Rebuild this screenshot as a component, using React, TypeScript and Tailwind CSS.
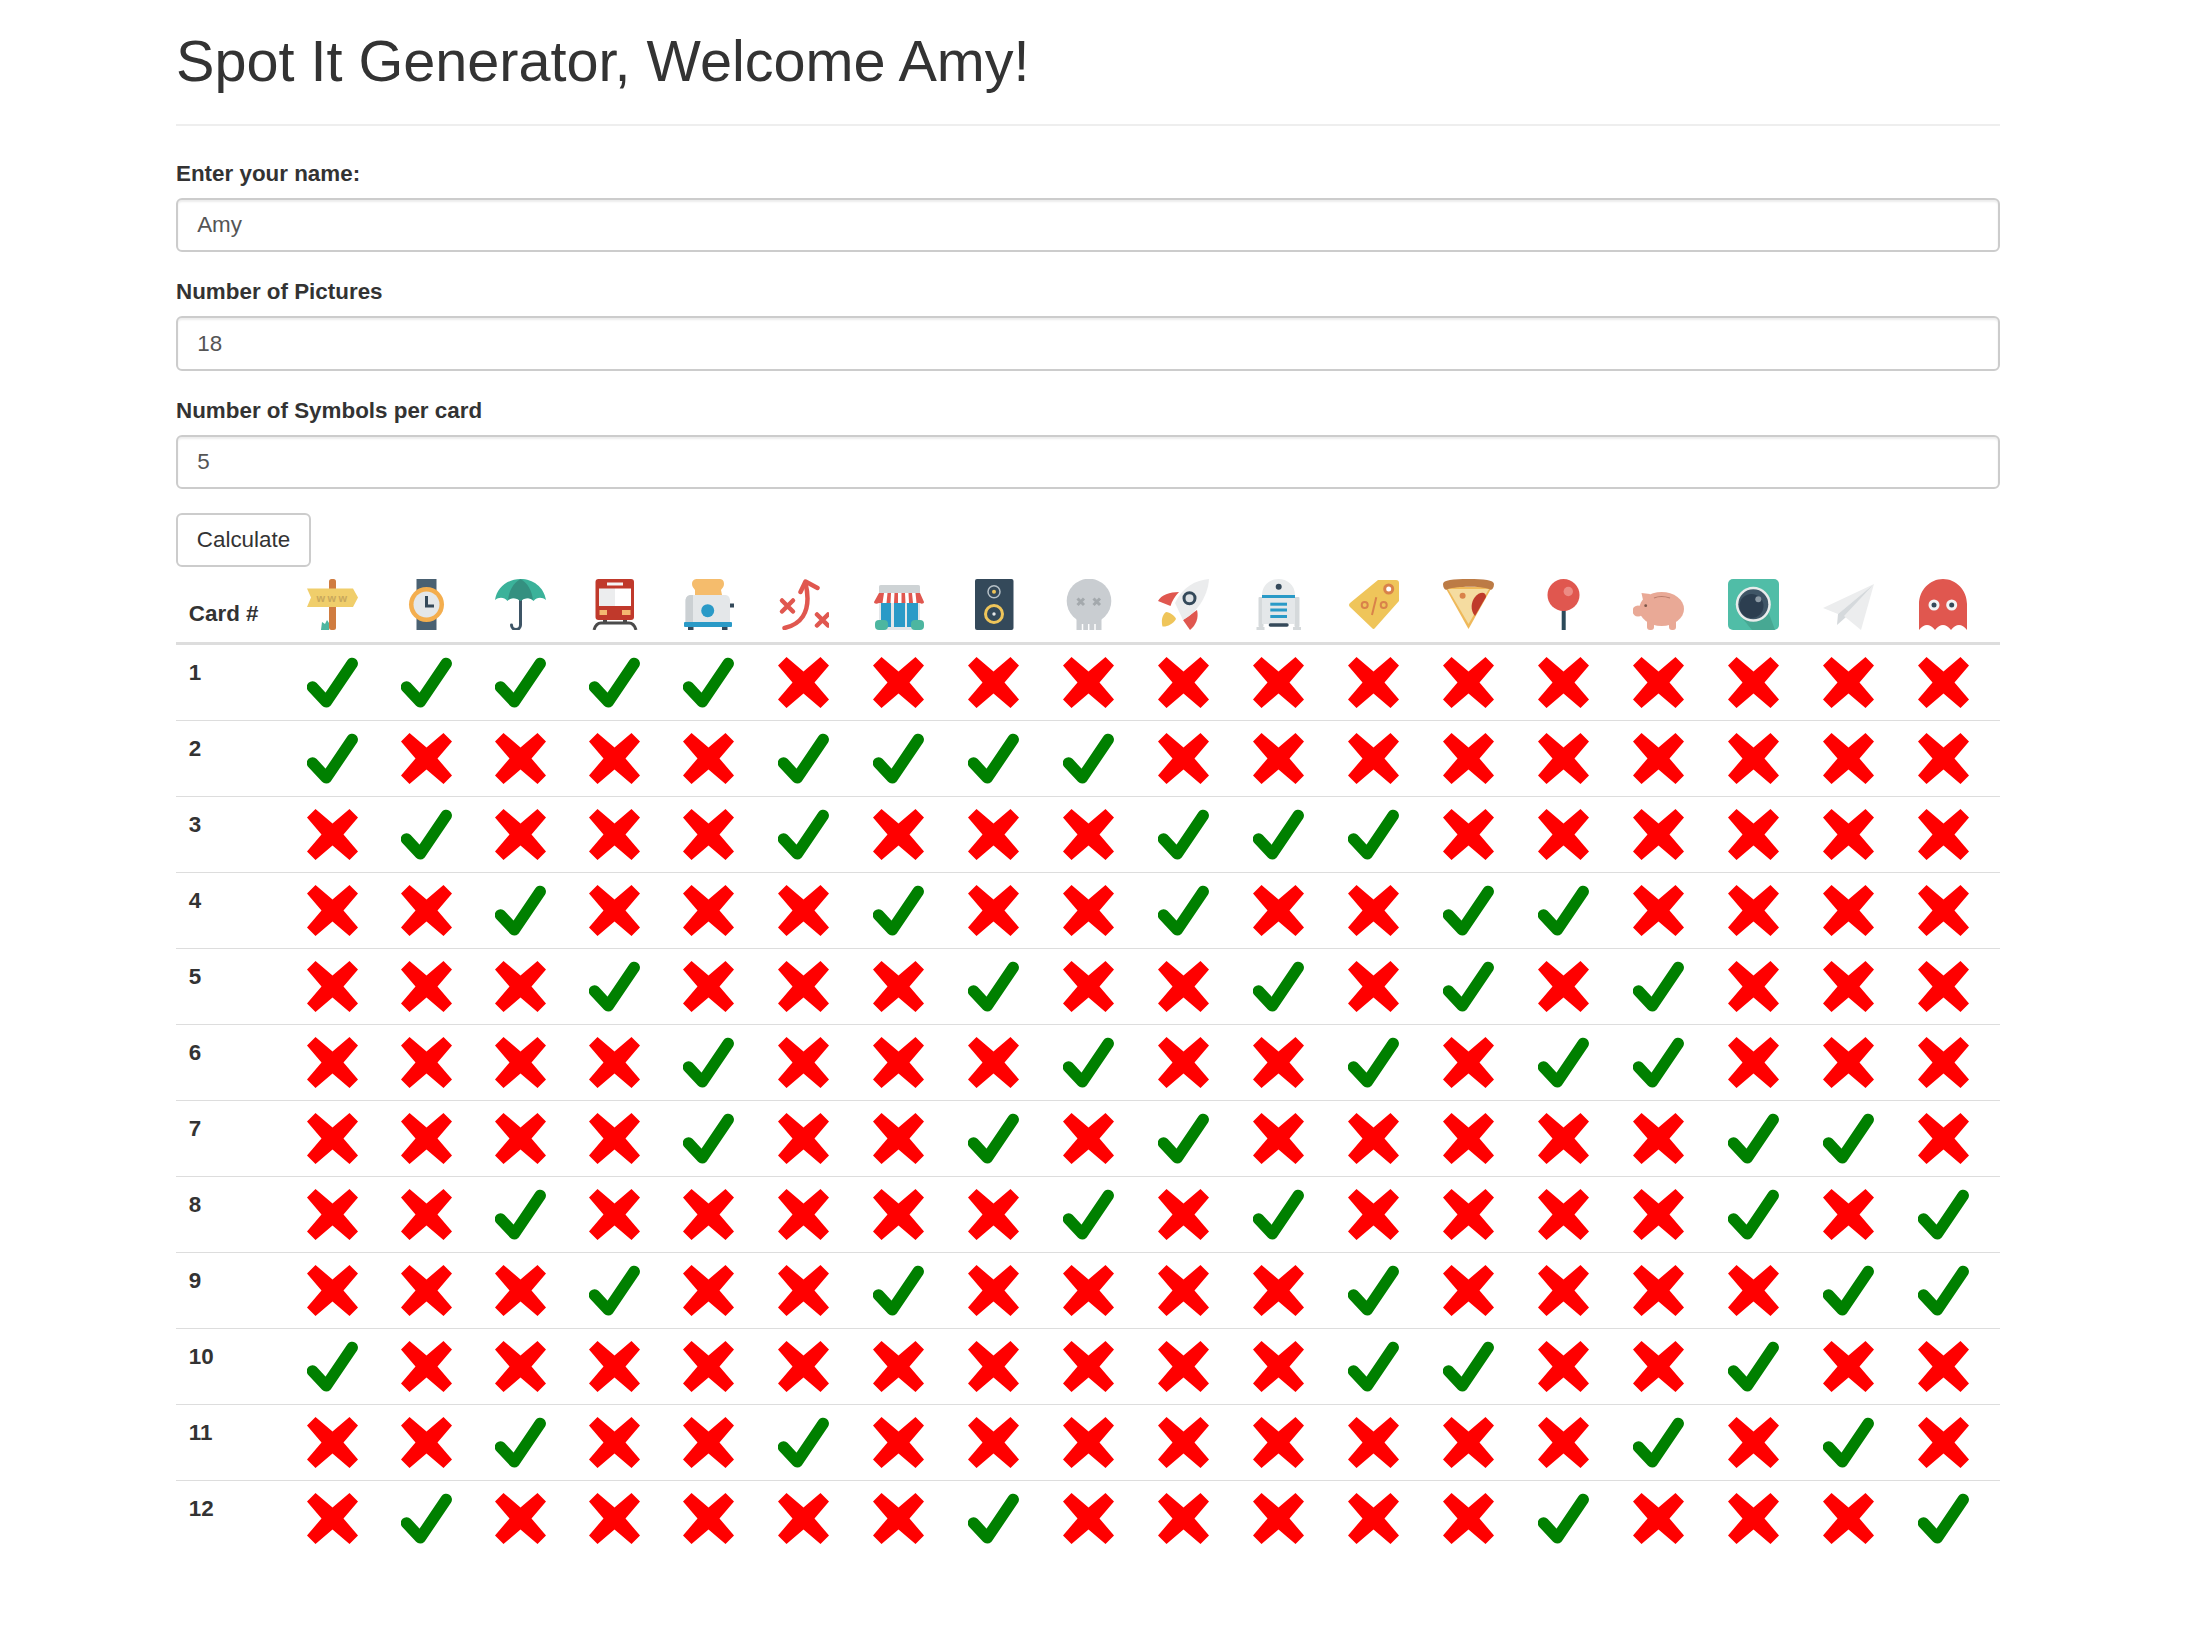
import type { ReactNode } from "react";

const CARDS = [
  [1, 2, 3, 4, 5],
  [1, 6, 7, 8, 9],
  [2, 6, 10, 11, 12],
  [3, 7, 10, 13, 14],
  [4, 8, 11, 13, 15],
  [5, 9, 12, 14, 15],
  [5, 8, 10, 16, 17],
  [3, 9, 11, 16, 18],
  [4, 7, 12, 17, 18],
  [1, 12, 13, 16],
  [3, 6, 15, 17],
  [2, 8, 14, 18],
];

const RED = "#E0574F";
const NAVY = "#34495A";
const BLUE = "#2A9AC7";
const YELLOW = "#EFC55A";
const TEAL = "#4DB6A0";
const LIGHT = "#E4E7E9";

function Icon({ children }: { children: ReactNode }) {
  return (
    <svg viewBox="0 0 51 51" className="block w-[51px] h-[51px]">
      {children}
    </svg>
  );
}

function Check() {
  return (
    <Icon>
      <path
        d="M5.5 30L19.3 44.8L45.2 6.5"
        fill="none"
        stroke="#008000"
        strokeWidth="11.5"
        strokeLinecap="round"
        strokeLinejoin="round"
      />
    </Icon>
  );
}

function Cross() {
  return (
    <Icon>
      <polygon
        points="8.5,0 25.5,14.5 42.5,0 51,8.5 36.5,25.5 51,42.5 42.5,51 25.5,36.5 8.5,51 0,42.5 14.5,25.5 0,8.5"
        fill="#FF0000"
      />
    </Icon>
  );
}

const pictures: ReactNode[] = [
  // signpost
  <Icon key="sign">
    <rect x="22" y="0" width="7" height="51" rx="2.5" fill="#D07C40" />
    <path d="M14 51L15 43L18 45L20 41L22 44V51Z" fill={TEAL} />
    <polygon points="0,9.5 46,9.5 51,18.5 46,28 0,28 4,18.5" fill="#F0CE6B" />
    <text x="9.5" y="22.5" fontSize="11" fill="#C9A85C" fontFamily="Liberation Sans" letterSpacing="2.5">www</text>
  </Icon>,
  // watch
  <Icon key="watch">
    <rect x="15.5" y="0" width="20" height="51" fill="#4A6172" />
    <circle cx="25.5" cy="25.5" r="17.5" fill="#F4AE4E" />
    <circle cx="25.5" cy="25.5" r="13" fill={LIGHT} />
    <path d="M25.5 17V27H33" fill="none" stroke={NAVY} strokeWidth="3" />
  </Icon>,
  // umbrella
  <Icon key="umbrella">
    <path d="M25.5 20V46a4.5 4.5 0 0 1-9 0" fill="none" stroke="#3E5566" strokeWidth="3" strokeLinecap="round" />
    <path d="M0 21C2 8 13 0 25.5 0C38 0 49 8 51 21C47 18 42 18 38.5 22C35 18 29 18 25.5 22C22 18 16 18 12.5 22C9 18 4 18 0 21Z" fill="#3BB29A" />
    <path d="M25.5 0C18 4 14 12 13 21C17 18 22 19 25.5 22C29 19 34 18 38 21C37 12 33 4 25.5 0Z" fill="#349080" />
  </Icon>,
  // train
  <Icon key="train">
    <path d="M5 51Q7 44 12 44H40Q45 44 47 51" fill="none" stroke="#4B4B4B" strokeWidth="3" />
    <rect x="14" y="40" width="4" height="5" fill="#4B4B4B" />
    <rect x="34" y="40" width="4" height="5" fill="#4B4B4B" />
    <rect x="6.5" y="0" width="38.5" height="41" rx="3" fill="#C0392B" />
    <rect x="18" y="3.5" width="16" height="3" fill="#F5F5F5" />
    <rect x="10" y="9.5" width="16" height="17.5" fill="#ECEDEE" />
    <rect x="26" y="9.5" width="16" height="17.5" fill="#FFFFFF" />
    <rect x="10.5" y="31" width="7.5" height="5" fill="#F4B870" />
    <rect x="33" y="31" width="8.5" height="5" fill="#F4B870" />
  </Icon>,
  // toaster
  <Icon key="toaster">
    <path d="M9 5C9 1 12 0 14 0H36C39 0 41 1 41 5C41 8 39 9 38 11L39 16H12L12 11C11 9 9 8 9 5Z" fill="#F5BC6C" />
    <rect x="47" y="24.5" width="4" height="4" fill={NAVY} />
    <path d="M2.5 43V22C2.5 18 5 16 8 16H42C45 16 47 18 47 22V43Z" fill={LIGHT} />
    <path d="M2.5 43V22C2.5 18 5 16 8 16H10V43Z" fill="#CBD0D3" />
    <circle cx="24.7" cy="31.7" r="6.5" fill={BLUE} />
    <rect x="5" y="47" width="5.5" height="4" fill={NAVY} />
    <rect x="39" y="47" width="5.5" height="4" fill={NAVY} />
    <rect x="1" y="43" width="48" height="5" rx="1" fill={BLUE} />
  </Icon>,
  // play diagram
  <Icon key="play">
    <g fill="none" stroke={RED} strokeWidth="4.5" strokeLinecap="round" strokeLinejoin="round">
      <path d="M6.5 49C20 46 35 36 27.5 4" />
      <path d="M22.5 13L27.5 2.5L39.5 9" />
      <path d="M4 21.5L15 32.5M15 21.5L4 32.5" />
      <path d="M39 35.5L50 46.5M50 35.5L39 46.5" />
    </g>
  </Icon>,
  // store
  <Icon key="store">
    <rect x="6" y="6" width="41" height="45" rx="2" fill={LIGHT} />
    <rect x="6" y="6" width="41" height="9" rx="2" fill="#CED3D5" />
    <rect x="8" y="24" width="10" height="24" fill={BLUE} />
    <rect x="21" y="24" width="11" height="24" fill={BLUE} />
    <rect x="34" y="24" width="11" height="24" fill={BLUE} />
    <path d="M6 14H47L51 23C51 25 48 25 47 24H6C4 25 1 25 1 23Z" fill={RED} />
    <path d="M11 14L9.5 24H13.5L14.5 14ZM18 14L17.5 24H21L21.5 14ZM25 14V24H28.5V14ZM32 14L32.5 24H36L35.5 14ZM39 14L40 24H43.5L42.5 14Z" fill="#FFFFFF" />
    <rect x="2" y="41" width="13" height="10" rx="4" fill={TEAL} />
    <rect x="38" y="41" width="13" height="10" rx="4" fill={TEAL} />
  </Icon>,
  // speaker
  <Icon key="speaker">
    <rect x="7" y="0" width="38.5" height="51" rx="2" fill={NAVY} />
    <circle cx="26" cy="12.7" r="6" fill="none" stroke="#B6C1C8" strokeWidth="1.5" />
    <circle cx="26" cy="12.7" r="2" fill={YELLOW} />
    <circle cx="26" cy="35" r="8.5" fill="none" stroke={YELLOW} strokeWidth="3" />
    <circle cx="26" cy="35" r="1.7" fill={LIGHT} />
  </Icon>,
  // skull
  <Icon key="skull">
    <rect x="13.5" y="36" width="25" height="15" fill="#C9CDD1" />
    <circle cx="26" cy="22" r="22.3" fill="#C9CDD1" />
    <path d="M19.5 45V51M25.7 45V51M32 45V51" stroke="#FFFFFF" strokeWidth="1.5" />
    <path d="M14.5 19.5L21 26M21 19.5L14.5 26M30.5 19.5L37 26M37 19.5L30.5 26" stroke="#A4A9AD" strokeWidth="3" />
  </Icon>,
  // rocket
  <Icon key="rocket">
    <path d="M0 22C3 16 12 13 21 13C17 17 14 22 12.5 27Z" fill={RED} />
    <path d="M39 31C41 39 38 46 32 51L25 41Z" fill={RED} />
    <path d="M51 0C38 1 24 8 17 24L25 41C38 34 50 18 51 0Z" fill="#EBECED" />
    <circle cx="31.5" cy="19.3" r="5.5" fill="#DDE1E4" stroke={NAVY} strokeWidth="3" />
    <path d="M8 33C12 33 17 37 18 40C15 45 9 48 4.5 47.5C3 42 4 36 8 33Z" fill={YELLOW} />
  </Icon>,
  // droid
  <Icon key="droid">
    <rect x="5.5" y="18" width="5" height="30" rx="1" fill="#D5D9DB" />
    <rect x="41.5" y="18" width="5" height="30" rx="1" fill="#D5D9DB" />
    <rect x="3.5" y="48" width="8" height="3" fill="#D5D9DB" />
    <rect x="40" y="48" width="8" height="3" fill="#D5D9DB" />
    <path d="M9 16C9 6 17 0 25.5 0S42 6 42 16Z" fill="#E9EBEC" />
    <circle cx="25.7" cy="7.7" r="3" fill={NAVY} />
    <rect x="9" y="19" width="33" height="26" fill={LIGHT} />
    <rect x="9" y="16" width="33" height="3" fill={BLUE} />
    <rect x="17.3" y="23.7" width="16.7" height="3" fill={BLUE} />
    <rect x="17.3" y="29.5" width="16.7" height="3" fill={BLUE} />
    <rect x="17.3" y="36" width="16.7" height="3" fill={BLUE} />
    <rect x="15.7" y="44.3" width="20" height="3.4" rx="1.7" fill={NAVY} />
  </Icon>,
  // price tag
  <Icon key="tag">
    <path d="M30 1H48Q51 1 51 4V22L27 49Q25.5 51 24 49L2 28Q0 26 2 24Z" fill={YELLOW} />
    <circle cx="40.7" cy="10" r="5.5" fill="#D9824A" />
    <circle cx="40.7" cy="10" r="2.5" fill="#FFFFFF" />
    <circle cx="16.7" cy="26" r="3" fill="none" stroke="#D9824A" strokeWidth="2" />
    <circle cx="35.7" cy="26" r="3" fill="none" stroke="#D9824A" strokeWidth="2" />
    <path d="M24 36L28.3 18.3" stroke="#D9824A" strokeWidth="2" />
  </Icon>,
  // pizza
  <Icon key="pizza">
    <polygon points="2,8 49,8 25.5,50" fill="#EFB95A" />
    <polygon points="5,10 46,10 25.5,45" fill="#F5DCA0" />
    <circle cx="19.6" cy="16.7" r="3" fill="#D9824A" />
    <path d="M32 18C36 13 43 12 43 18L32 37C27 31 28 23 32 18Z" fill="#BF3B2B" />
    <path d="M0 5C0 1 10 0 25.5 0S51 1 51 5C51 10 48 12 46 10C38 7 14 7 5 10C3 12 0 10 0 5Z" fill="#BC7B45" />
  </Icon>,
  // pin
  <Icon key="pin">
    <rect x="23.7" y="30" width="4" height="21" fill="#2C4A5A" />
    <circle cx="25.5" cy="16" r="16" fill={RED} />
    <circle cx="30.3" cy="12.5" r="4.7" fill="#EC8B84" />
  </Icon>,
  // piggy bank
  <Icon key="piggy">
    <ellipse cx="28.6" cy="30" rx="22.4" ry="17" fill="#E9A996" />
    <circle cx="5" cy="32" r="5.5" fill="#E9A996" />
    <path d="M8.5 14L17 15L15 24L10 21Z" fill="#E9A996" />
    <rect x="14" y="40" width="7" height="11" rx="3" fill="#E9A996" />
    <rect x="36" y="40" width="7" height="11" rx="3" fill="#E9A996" />
    <path d="M21 19Q28 16 37 19" fill="none" stroke="#B97C6B" strokeWidth="1.2" />
    <circle cx="12.7" cy="26.7" r="1.4" fill="#7A5548" />
  </Icon>,
  // camera
  <Icon key="camera">
    <rect x="0" y="0" width="51" height="51" rx="5" fill="#50BDA7" />
    <path d="M10 34L32 10L47 51H24Z" fill="#47A893" />
    <circle cx="25.3" cy="25.3" r="17.5" fill="#E9ECEC" />
    <circle cx="25.3" cy="25.3" r="15" fill="#3F5566" />
    <circle cx="23.5" cy="27" r="12" fill="#2C3E50" />
    <circle cx="30.3" cy="20.3" r="3" fill="#8C9AA5" />
  </Icon>,
  // paper plane
  <Icon key="plane">
    <polygon points="51,5 0,29 15,35" fill="#ECEDEE" />
    <polygon points="51,5 15,35 14,46 23,38" fill="#D5D9DC" />
    <polygon points="51,5 21,37 38,51" fill="#ECEDEE" />
  </Icon>,
  // ghost
  <Icon key="ghost">
    <path d="M1 51V25C1 11 12 0 25 0S49 11 49 25V51Q41 41 33 51Q25 41 17 51Q9 41 1 51Z" fill={RED} />
    <circle cx="16" cy="26" r="5.5" fill="#F3F4F5" />
    <circle cx="16" cy="26" r="2.5" fill={NAVY} />
    <circle cx="33.7" cy="26" r="5.5" fill="#F3F4F5" />
    <circle cx="33.7" cy="26" r="2.5" fill={NAVY} />
  </Icon>,
];

function Field({ label, value }: { label: string; value: string }) {
  return (
    <div className="mb-[24px]">
      <label className="block mb-[8px] text-[22.4px] leading-[32px] font-bold">{label}</label>
      <input
        readOnly
        value={value}
        className="block w-full h-[54.4px] px-[19.2px] border-2 border-[#ccc] rounded-[6px] text-[22.4px] text-[#555] bg-white shadow-[inset_0_2px_2px_rgba(0,0,0,0.075)] outline-none"
      />
    </div>
  );
}

export default function App() {
  return (
    <div className="min-h-[1650px] bg-white text-[#333] font-['Liberation_Sans',Arial,sans-serif]">
      <div className="ml-[176px] w-[1824px]">
        <div className="pt-[30px] pb-[31px] border-b-2 border-[#eee] mb-[32px]">
          <h1 className="text-[57.6px] leading-[63px] font-normal">Spot It Generator, Welcome Amy!</h1>
        </div>

        <Field label="Enter your name:" value="Amy" />
        <Field label="Number of Pictures" value="18" />
        <Field label="Number of Symbols per card" value="5" />

        <button className="block h-[53.6px] w-[135px] border-2 border-[#ccc] rounded-[6px] bg-white text-[22.4px] text-[#333]">
          Calculate
        </button>

        <table className="w-full table-fixed border-separate border-spacing-0">
          <colgroup>
            <col className="w-[118px]" />
            {pictures.map((_, i) => (
              <col key={i} className={i < 4 ? "w-[94px]" : "w-[95px]"} />
            ))}
          </colgroup>
          <thead>
            <tr>
              <th className="align-bottom text-left text-[22.4px] leading-[33px] font-bold px-[12.8px] py-[12px] border-b-[3px] border-[#ddd]">
                Card #
              </th>
              {pictures.map((pic, i) => (
                <th key={i} className="align-bottom px-[12.8px] py-[12px] border-b-[3px] border-[#ddd]">
                  {pic}
                </th>
              ))}
            </tr>
          </thead>
          <tbody>
            {CARDS.map((card, r) => (
              <tr key={r}>
                <td className={`align-top text-[22.4px] leading-[31px] font-bold px-[12.8px] py-[12px] ${r > 0 ? "border-t border-[#ddd]" : ""}`}>
                  {r + 1}
                </td>
                {pictures.map((_, c) => (
                  <td key={c} className={`align-top px-[12.8px] py-[12px] ${r > 0 ? "border-t border-[#ddd]" : ""}`}>
                    {card.includes(c + 1) ? <Check /> : <Cross />}
                  </td>
                ))}
              </tr>
            ))}
          </tbody>
        </table>
      </div>
    </div>
  );
}
